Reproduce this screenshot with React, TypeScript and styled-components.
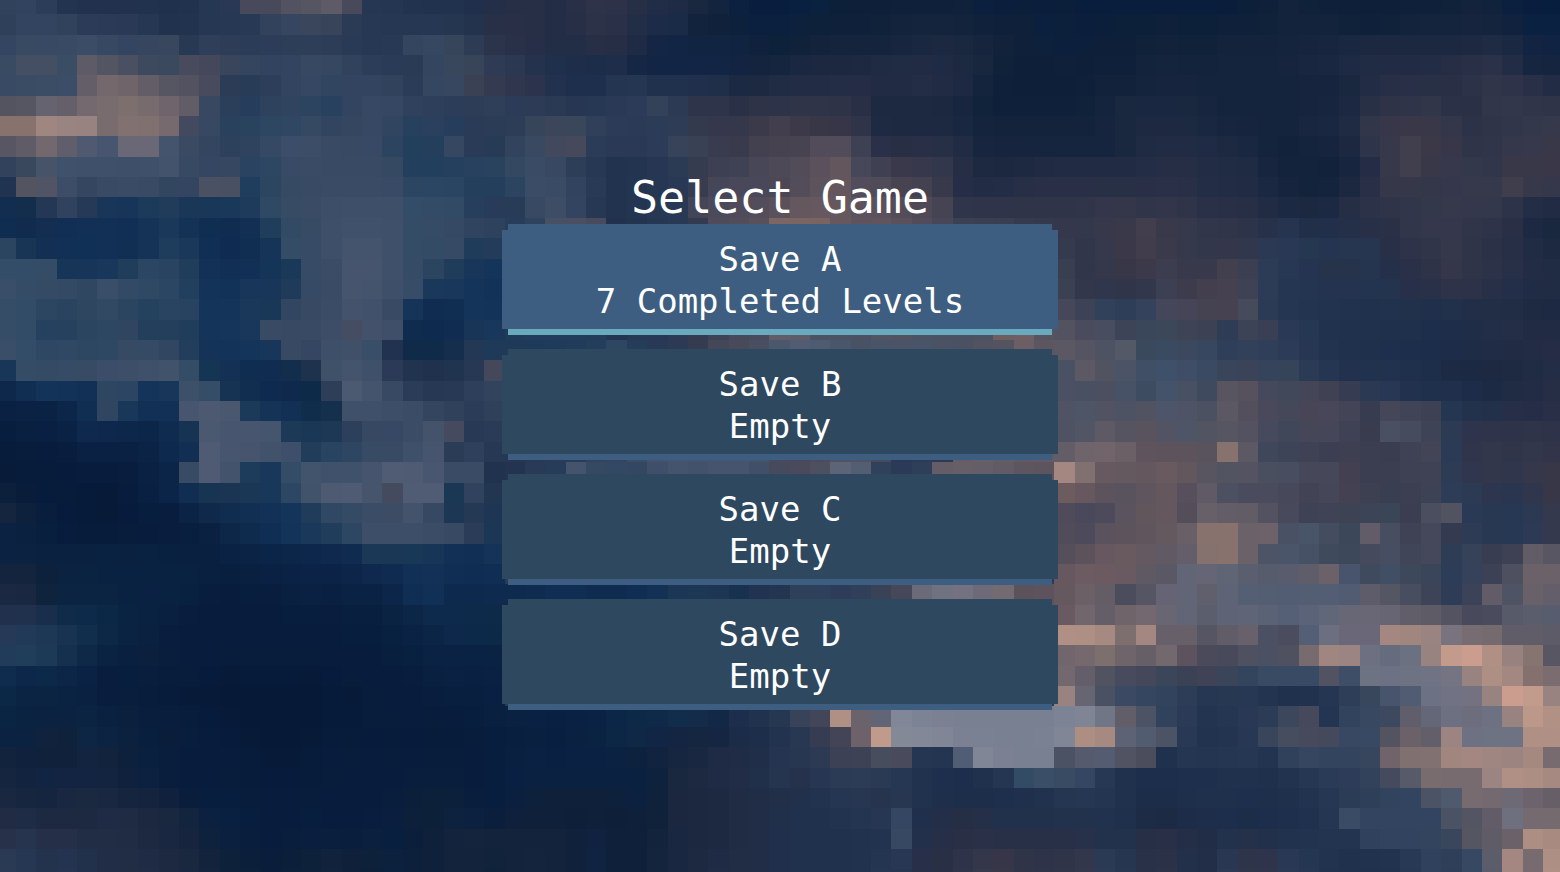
import React from "react";
import styled, { createGlobalStyle } from "styled-components";

const GlobalStyle = createGlobalStyle`
  *, *::before, *::after { box-sizing: border-box; }
  body {
    margin: 0;
    background: #14233a;
    color: #fff;
    font-family: "DejaVu Sans Mono", "Liberation Mono", monospace;
  }
`;

/* One character per sky tile, looked up in this table. */
const palette: Record<string, string> = {
  // deep navy
  "0": "#061a38", "1": "#081d3d", "2": "#0a2143", "3": "#0b2549", "4": "#0e2a4f",
  "5": "#112f55", "6": "#14345a", "7": "#1a395b", "8": "#213e5c", "9": "#28435f",
  "@": "#112443",
  // slate
  a: "#1b2d4b", b: "#20314d", c: "#263753", d: "#2b3b57", e: "#32445f", f: "#384a64",
  g: "#3f506a", h: "#47566e", i: "#515d74", j: "#5f6678", k: "#6e7384", l: "#798092",
  "#": "#848998",
  // neutral dusk
  m: "#0e2039", n: "#15243d", o: "#1b2840", p: "#212c45", q: "#282f46", r: "#2f3449",
  s: "#36394c", t: "#3e4153", u: "#48495b", v: "#545461", w: "#615c67", x: "#6d6269",
  y: "#776b6f", z: "#837270", Y: "#6a6776", Z: "#797482",
  // warm light
  A: "#3a3747", B: "#46414f", C: "#524c5a", D: "#5c525c", E: "#66585e", F: "#6f5d60",
  G: "#7c6663", H: "#88726e", I: "#988381", J: "#a38780", K: "#b09084", L: "#c09b8c",
  M: "#cd9d90",
  // teal slate
  N: "#0a2341", O: "#0d2a48", P: "#142f4d", Q: "#1a3754", R: "#203d5a", S: "#2b4662",
  T: "#334c67", U: "#3b475a", V: "#4a5162", W: "#595d6b",
};

const skyRows = [
  "eedbbbbbbbcduuvvwucc bbbbpqqpqrrqppon211 22mmmmmmm21m1m11111 111mmnmmmmmmmmnm211",
  "deeedddcbbcccefUUdcc cccbqqqpqrqpaammm22 mmmmmnnnnmmm2m1mmmm mmmmmnnnmmmnnnnnm22",
  "efffgfefUceddddddccc ffUdrqqppqqp@@@@@mm mnnnnnooonnmm2mmmmn mmnnnnnnooooooopo@@",
  "fVVfwvVUfuuUfeeffedd ceUUddbbaaa@@@@@@nn ooooppppoommmmmmmnn nnnnnnoopppppqqrpnn",
  "fffgwyxwvvudcdefeeee cfftsrrbaaccbbbboop pppqppqppnmmmmmnmnn nnnnnnnnnpqqqqrrrqp",
  "vvYwyyzyxwfd8ee98eff edddedddccddUdrrqrr rrrqoooonmmmmmmnooo onnnnnnnoqrrsqqssrr",
  "HHJIIyzzyuf99SSfeefe 8e8dddUUUeddddsssAB AAArooooonnnnnnnooo oonnnnoopsAAAsqrrss",
  "vwywihYYhfedefggfff9 88fccefuuddddUUssBB BCCtqqqqpnnnnnnnnpp ppoonmnnorsBAArrssA",
  "eUhggggghfef9Sffffff 888S9fffdcbbcdsttuC CDEutAssqoooppppppq qpppnnnmnpsBAssrAAA",
  "bvvgefffeeVV7Sffffff SSSRRSgfedbcccsuuuB CDECCBBspppqqqqqqqq qppponmnoqAsrsssBss",
  "4Pcec76RRQ77RTffgggg TTT8dcfgecbccduuCCD EEEDDCCBrrrrrrrssrs rqqqpoooqrrrssssrpp",
  "53P5555575445RTfgggg Tffee8eVVubbccsCCDG GGEDEDCutttsssssABA ssrrqcpbpqqsssrrqon",
  "SQ555546R75446Tfghhg TTfRRdddddddddddddd dddddddddddddsrsABA srsrddccccqrrsrqqpo",
  "TTTQ67RSS85556QTfhhg fSR66dddddddddddddd dddddddddddddtrsAAt ssBtdccqqcpqrArrqpp",
  "gTffSgTTS86576Rffhhg T7765dddddddddddddd dddddddddddddtrrrrt ABBtdcbccbcqqrrqbpp",
  "TTS9eT9RSS667Qeffhge74466 ddddddddddddddddddddddddddd utedeuuBBVdbcbbbbbbbpppoo",
  "TT88SSe8RR667fffguhg44476 88888bccdstuuwwVVVvvVVVVFFv vuVtUUttdttdcbbbbbaapbqpp",
  "gTSTSSfTe85667feggTbOOPc8 Q77RRT8cdsuuVhiihVhVhVVvvxD wvVWUfUfdeddcbbbaaaappppq",
  "7TfTfggghTQ544Pbghgdbbbcu ddddddddddddddddddddddddddd VwvVgggfUteUdcbbbbaoooopp",
  "35665SS67gTQ443Odihfdccee ddddddddddddddddddddddddddd VVuhUhVUvDuUutsddbbbaoppq",
  "22235e755hihR65OPggggeece ddddddddddddddddddddddddddd vhvVvhvVwCuuBuusuttcbbqpq",
  "122244334QhhhhRQQdfefhucd ddddddddddddddddddddddddddd VvwvDvhvvvuUuutsVVtdrrrrr",
  "0111222245ihhggRSSffghcec ccddeeghhhhhhuuuvvudddwxwww wxyxDDDDHwUttsttstudrsrsr",
  "100111123fig86Thgghiihfgb bd8hfTeghghhguuvjiecewxwwDD JzEEEFEvvvVVuuBstttdrsrsA",
  "m110001235QQQ7SgiihuiiQeb ddddddddddddddddddddddddddd FEDvDECwVuuutuBtsttddrcrA",
  "om11001112O4556RTfffheQcQ ddddddddddddddddddddddddddd CuuDEECxwwvutttUUsVvdccds",
  "2N110101121O4567RSggfgfdQ ddddddddddddddddddddddddddd CuDDDExHHxxVhVUwVtusdccds",
  "2NNNNNNNN122233344RQ7Q556 ddddddddddddddddddddddddddd CDEFEwwzHxVhVUUuVtudUstwv",
  "nnmNN222NN212223234455545 ddddddddddddddddddddddddddd EFFEwvjYjWWWwxhUgUUdetvxx",
  "oomNNNN22N111122222356344 44554455QQQPbbeedetuYkZYyDD ExwuvYjwjiiiiiiwvVtdtwVxw",
  "bbaO4ON221111111121N3O4OO ddddddddddddddddddddddddddd EywxyYjWjjjijjYYYwwvuuWWi",
  "dRQQPO2N11111111111N23O4O ddddddddddddddddddddddddddd KKJzJwxvwxVuikYYJJIZyywww",
  "8RRPO22m111111111111N222N ddddddddddddddddddddddddddd xyzxwyDuuvVvyJIkjkILMKIzv",
  "43O3211111100000111112222 ddddddddddddddddddddddddddd ywvuuUttUefffvgkkkkZIKJHy",
  "ONNN211100000000001111212 ddddddddddddddddddddddddddd IYVfeedcccbbbcdUhikkZIMLI",
  "NNNNNNm111100000001111112 N22223OOPP@abcUuKxj#lllllll l#kwVedbcddUubefUwjkYkILK",
  "22nmONN1m1110000101010011 1212NOO@@n@aabcsuxL###lllll #KJjiVdbbcUVuuffvxwIkkkKK",
  "nmmmnnmN11111001111111111 222222m@nopppccdttVucci#lll VWivubcccdbefeeUxzzJJJIJy",
  "n@@@@@m211110110111111111 2222222mooppbcqcdddcbaabcTg ffcbaaaabbabcddeuWyyyIKKJ",
  "onnooonnm11111111111mmm11 2mmmmm2mooopppbbccqcbbaaabb cccbaabbbabbbcddeeViyyYxw",
  "ppoooppoonN211111112mmNN1 mmmmmmmmoooppbbbbccfbpqqbbb bbbbooaaaaaabcgeeeeVvwkyy",
  "qcqqpppoonm2111211N11mnnn nnnm@mmnoooppbbbbbbfbqqqqqq qqbbqqqpbqbbbcbeeeeUvwxKJ",
  "dcbcbpppoonmm1mmnmmNmmnnm nnnm@mmnoopppbbbbbccqqrsArr rsdcqrbpdrrdcbbbbcedfWJyK",
  "dcbcbpppoonmm1mmnmmNmmnnm nnnm@mmnoopppbbbbbccqqrsArr rsdcqrbpdrrdcbbbbcedfWJyK",
].map((row) => row.replace(/ /g, ""));

type Rgb = [number, number, number];

const toRgb = (hex: string): Rgb => [
  parseInt(hex.slice(1, 3), 16),
  parseInt(hex.slice(3, 5), 16),
  parseInt(hex.slice(5, 7), 16),
];

const sky: Rgb[][] = skyRows.map((row) => [...row].map((key) => toRgb(palette[key])));

/* Tiles blend with neighbours of a similar tone; strong edges stay sharp. */
const BLEND_RANGE = 22;

const blendTile = (x: number, y: number): string => {
  const own = sky[y][x];
  const sum = own.map((channel) => channel * 2);
  let weight = 2;
  for (const [dx, dy] of [[-1, 0], [1, 0], [0, -1], [0, 1]]) {
    const other = sky[y + dy]?.[x + dx];
    if (!other) continue;
    const distance = Math.max(...other.map((channel, i) => Math.abs(channel - own[i])));
    if (distance > BLEND_RANGE) continue;
    const share = 1 - distance / (BLEND_RANGE + 8);
    other.forEach((channel, i) => {
      sum[i] += channel * share;
    });
    weight += share;
  }
  return `rgb(${sum.map((channel) => Math.round(channel / weight)).join(",")})`;
};

const skyTiles = sky.flatMap((row, y) => row.map((_, x) => ({ x, y, fill: blendTile(x, y) })));

const Screen = styled.div`
  display: grid;
  min-height: 100vh;
  overflow: hidden;
`;

const SkyArt = styled.svg`
  grid-area: 1 / 1;
  display: block;
  width: 100%;
  height: 100%;
  min-height: 100vh;
`;

const Menu = styled.main`
  grid-area: 1 / 1;
  place-self: center;
  z-index: 1;
  display: flex;
  flex-direction: column;
  width: 556px;
  max-width: 100%;
  padding-top: 10px;
`;

const Title = styled.h1`
  margin: 0;
  font-size: 45px;
  font-weight: 400;
  line-height: 52px;
  text-align: center;
`;

const SlotList = styled.ul`
  display: flex;
  flex-direction: column;
  gap: 14px;
  margin: 0;
  padding: 0;
  list-style: none;
`;

const SlotButton = styled.button<{ $selected: boolean }>`
  display: flex;
  flex-direction: column;
  align-items: center;
  width: 100%;
  padding: 14px 24px 7px;
  border: 0;
  border-bottom: 6px solid ${(p) => (p.$selected ? "#6aaabf" : "#3d5e80")};
  background: ${(p) => (p.$selected ? "#3d5e80" : "#2e4860")};
  color: #fff;
  font-family: inherit;
  font-size: 34px;
  line-height: 42px;
  cursor: pointer;
  clip-path: polygon(
    6px 0, calc(100% - 6px) 0,
    calc(100% - 6px) 6px, 100% 6px,
    100% calc(100% - 6px), calc(100% - 6px) calc(100% - 6px),
    calc(100% - 6px) 100%, 6px 100%,
    6px calc(100% - 6px), 0 calc(100% - 6px),
    0 6px, 6px 6px
  );
`;

const SlotLine = styled.span`
  display: block;
`;

const Sky = () => (
  <SkyArt
    viewBox="0.214 0.3 76.62 42.83"
    preserveAspectRatio="xMidYMid slice"
    shapeRendering="crispEdges"
    aria-hidden="true"
  >
    {skyTiles.map((t) => (
      <rect key={`${t.x}-${t.y}`} x={t.x} y={t.y} width={1} height={1} fill={t.fill} />
    ))}
  </SkyArt>
);

const saves = [
  { name: "Save A", status: "7 Completed Levels" },
  { name: "Save B", status: "Empty" },
  { name: "Save C", status: "Empty" },
  { name: "Save D", status: "Empty" },
];

export default function App() {
  const [selected, setSelected] = React.useState("Save A");
  return (
    <>
      <GlobalStyle />
      <Screen>
        <Sky />
        <Menu>
          <Title>Select Game</Title>
          <SlotList>
            {saves.map((save) => (
              <li key={save.name}>
                <SlotButton
                  type="button"
                  $selected={save.name === selected}
                  aria-pressed={save.name === selected}
                  onClick={() => setSelected(save.name)}
                >
                  <SlotLine>{save.name}</SlotLine>
                  <SlotLine>{save.status}</SlotLine>
                </SlotButton>
              </li>
            ))}
          </SlotList>
        </Menu>
      </Screen>
    </>
  );
}
